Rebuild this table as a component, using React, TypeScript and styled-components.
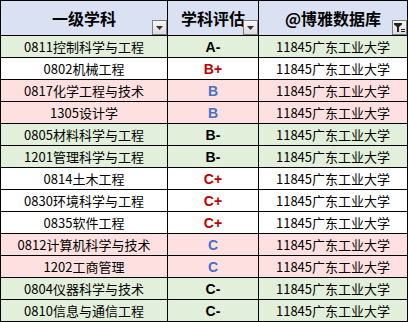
import styled, { createGlobalStyle } from "styled-components";

const GlobalStyle = createGlobalStyle`
  html, body {
    margin: 0;
    padding: 0;
    background: #fff;
  }
  body {
    font-family: "Noto Sans CJK SC", "Liberation Sans", sans-serif;
  }
`;

const fills = {
  green: "#e2efda",
  pink: "#ffe0e0",
  white: "#ffffff",
};

const gradeColors = {
  red: "#c00000",
  blue: "#4472c4",
  black: "#000000",
};

type Fill = keyof typeof fills;
type Tone = keyof typeof gradeColors;

const rows: { subject: string; grade: string; fill: Fill; tone: Tone }[] = [
  { subject: "0811控制科学与工程", grade: "A-", fill: "green", tone: "black" },
  { subject: "0802机械工程", grade: "B+", fill: "white", tone: "red" },
  { subject: "0817化学工程与技术", grade: "B", fill: "pink", tone: "blue" },
  { subject: "1305设计学", grade: "B", fill: "pink", tone: "blue" },
  { subject: "0805材料科学与工程", grade: "B-", fill: "green", tone: "black" },
  { subject: "1201管理科学与工程", grade: "B-", fill: "green", tone: "black" },
  { subject: "0814土木工程", grade: "C+", fill: "white", tone: "red" },
  { subject: "0830环境科学与工程", grade: "C+", fill: "white", tone: "red" },
  { subject: "0835软件工程", grade: "C+", fill: "white", tone: "red" },
  { subject: "0812计算机科学与技术", grade: "C", fill: "pink", tone: "blue" },
  { subject: "1202工商管理", grade: "C", fill: "pink", tone: "blue" },
  { subject: "0804仪器科学与技术", grade: "C-", fill: "green", tone: "black" },
  { subject: "0810信息与通信工程", grade: "C-", fill: "green", tone: "black" },
];

export default function App() {
  return (
    <>
      <GlobalStyle />
      <Sheet>
        <HeadCell>
          一级学科
          <FilterButton>
            <Arrow />
          </FilterButton>
        </HeadCell>
        <HeadCell>
          学科评估
          <FilterButton>
            <Arrow />
          </FilterButton>
        </HeadCell>
        <HeadCell>
          @博雅数据库
          <FilterButton>
            <Funnel />
          </FilterButton>
        </HeadCell>
        {rows.map((r) => (
          <Row key={r.subject}>
            <Cell $fill={fills[r.fill]}>{r.subject}</Cell>
            <GradeCell $fill={fills[r.fill]} $tone={gradeColors[r.tone]}>
              {r.grade}
            </GradeCell>
            <Cell $fill={fills[r.fill]}>11845广东工业大学</Cell>
          </Row>
        ))}
      </Sheet>
    </>
  );
}

function Arrow() {
  return (
    <svg width="7" height="4" viewBox="0 0 7 4">
      <path d="M0 0h7L3.5 4z" fill="#333" />
    </svg>
  );
}

function Funnel() {
  return (
    <svg width="11" height="11" viewBox="0 0 11 11">
      <path d="M0 1h8v1.5L5 5v5H3V5L0 2.5z" fill="#222" />
      <rect x="7" y="7" width="4" height="1" fill="#222" />
      <rect x="7" y="9" width="4" height="1" fill="#222" />
    </svg>
  );
}

const Sheet = styled.div`
  display: grid;
  grid-template-columns: 166px 90px 148px;
  grid-template-rows: 34px repeat(13, 21px);
  gap: 1px;
  padding: 1px;
  width: 408px;
  box-sizing: border-box;
  background: #000;
`;

const Row = styled.div`
  display: contents;
`;

const HeadCell = styled.div`
  position: relative;
  display: flex;
  align-items: center;
  justify-content: center;
  background: #d9e1f2;
  font-size: 16px;
  font-weight: 700;
  color: #000;
  padding-bottom: 1px;
`;

const FilterButton = styled.div`
  position: absolute;
  right: 0;
  bottom: 0;
  width: 13px;
  height: 13px;
  display: flex;
  align-items: center;
  justify-content: center;
  border: 1px solid #7f7f7f;
  background: linear-gradient(#f7f7f7, #dcdcdc);
`;

const Cell = styled.div<{ $fill: string }>`
  display: flex;
  align-items: center;
  justify-content: center;
  background: ${(p) => p.$fill};
  font-size: 13px;
  color: #000;
  white-space: nowrap;
`;

const GradeCell = styled(Cell)<{ $tone: string }>`
  font-family: "Liberation Sans", sans-serif;
  font-size: 14px;
  font-weight: 700;
  color: ${(p) => p.$tone};
`;
